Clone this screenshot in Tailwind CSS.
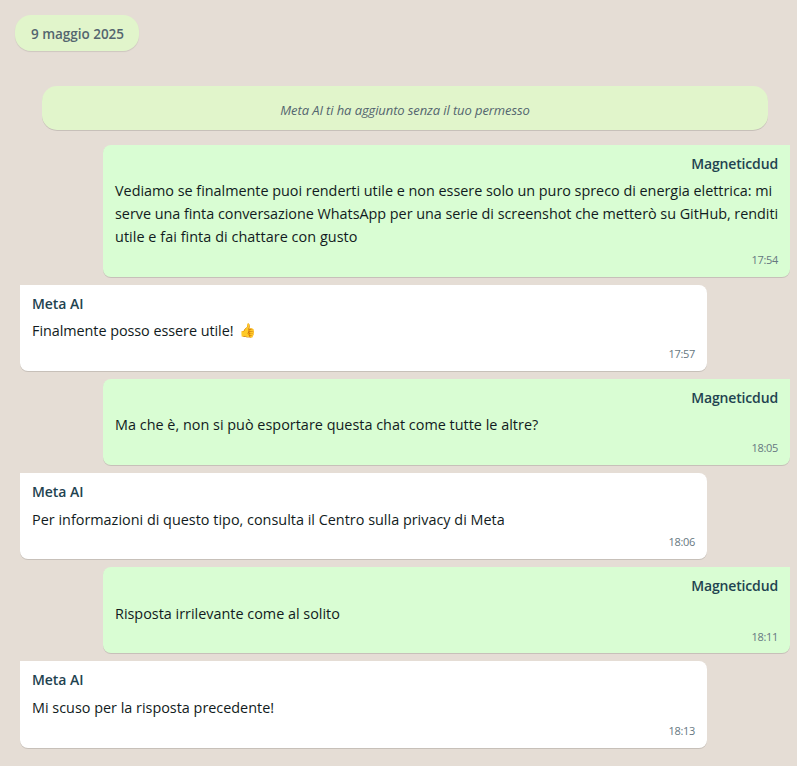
<!DOCTYPE html>
<html lang="it">
<head>
<meta charset="utf-8">
<title>Chat</title>
<script src="https://cdn.jsdelivr.net/npm/@tailwindcss/browser@4"></script>
</head>
<body class="bg-[#e5ddd5] font-['Open_Sans','Noto_Sans',sans-serif] text-[#111b21] h-[766px] overflow-hidden">
<main class="flex flex-col pt-[15px]">
  <div class="ml-[15px] w-[124px] h-9 rounded-[16px] bg-[#e1f5cb] shadow-[0_1px_1px_rgba(0,0,0,0.1)] flex items-center justify-center text-[13.5px] tracking-[-0.03px] leading-5 pt-px pl-px font-semibold text-[#54656f] whitespace-nowrap">9 maggio 2025</div>
  <div class="mt-[35px] ml-[42px] w-[726px] h-[44px] rounded-[15px] bg-[#e1f5cb] shadow-[0_1px_0.5px_rgba(0,0,0,0.13)] flex items-center justify-center text-[13px] tracking-[-0.1px] leading-5 pt-[3px] italic text-[#54656f] whitespace-nowrap">Meta AI ti ha aggiunto senza il tuo permesso</div>

  <section class="mt-[15px] flex flex-col gap-[8.1px] pl-5 pr-[7px] whitespace-nowrap">
    <article class="self-end w-[687px] h-[131.5px] rounded-[8px] rounded-tr-none bg-[#d9fdd3] shadow-[0_1px_0.5px_rgba(0,0,0,0.13)] px-3 pt-[9px] flex flex-col">
      <h2 class="text-right text-[14px] tracking-[-0.15px] leading-5 font-semibold text-[#1f4350]">Magneticdud</h2>
      <p class="mt-[5px] text-[14.4px] leading-[23px]"><span class="block tracking-[-0.015px]">Vediamo se finalmente puoi renderti utile e non essere solo un puro spreco di energia elettrica: mi</span><span class="block tracking-[-0.03px]">serve una finta conversazione WhatsApp per una serie di screenshot che metterò su GitHub, renditi</span><span class="block tracking-[0.05px]">utile e fai finta di chattare con gusto</span></p>
      <time class="mt-[4px] text-right text-[11px] tracking-[-0.3px] leading-4 text-[#667781]">17:54</time>
    </article>
    <article class="w-[687px] h-[86px] rounded-[8px] rounded-tl-none bg-white shadow-[0_1px_0.5px_rgba(0,0,0,0.13)] px-3 pt-[9px] flex flex-col">
      <h2 class="text-[14px] tracking-[-0.05px] leading-5 font-semibold text-[#1f4350]">Meta AI</h2>
      <p class="mt-[5px] text-[14.4px] tracking-[-0.05px] leading-[23px] flex">Finalmente posso essere utile!<span class="ml-[6px] text-[13.5px]">👍</span></p>
      <time class="mt-[4px] text-right text-[11px] tracking-[-0.3px] leading-4 text-[#667781]">17:57</time>
    </article>
    <article class="self-end w-[687px] h-[86px] rounded-[8px] rounded-tr-none bg-[#d9fdd3] shadow-[0_1px_0.5px_rgba(0,0,0,0.13)] px-3 pt-[9px] flex flex-col">
      <h2 class="text-right text-[14px] tracking-[-0.15px] leading-5 font-semibold text-[#1f4350]">Magneticdud</h2>
      <p class="mt-[5px] text-[14.4px] tracking-[0.015px] leading-[23px]">Ma che è, non si può esportare questa chat come tutte le altre?</p>
      <time class="mt-[4px] text-right text-[11px] tracking-[-0.3px] leading-4 text-[#667781]">18:05</time>
    </article>
    <article class="w-[687px] h-[86px] rounded-[8px] rounded-tl-none bg-white shadow-[0_1px_0.5px_rgba(0,0,0,0.13)] px-3 pt-[9px] flex flex-col">
      <h2 class="text-[14px] tracking-[-0.05px] leading-5 font-semibold text-[#1f4350]">Meta AI</h2>
      <p class="mt-[6.5px] text-[14.4px] tracking-[0.01px] leading-[23px]">Per informazioni di questo tipo, consulta il Centro sulla privacy di Meta</p>
      <time class="mt-[2.5px] text-right text-[11px] tracking-[-0.3px] leading-4 text-[#667781]">18:06</time>
    </article>
    <article class="self-end w-[687px] h-[86px] rounded-[8px] rounded-tr-none bg-[#d9fdd3] shadow-[0_1px_0.5px_rgba(0,0,0,0.13)] px-3 pt-[9px] flex flex-col">
      <h2 class="text-right text-[14px] tracking-[-0.15px] leading-5 font-semibold text-[#1f4350]">Magneticdud</h2>
      <p class="mt-[6.5px] text-[14.4px] leading-[23px]">Risposta irrilevante come al solito</p>
      <time class="mt-[3.5px] text-right text-[11px] tracking-[-0.3px] leading-4 text-[#667781]">18:11</time>
    </article>
    <article class="w-[687px] h-[87px] rounded-[8px] rounded-tl-none bg-white shadow-[0_1px_0.5px_rgba(0,0,0,0.13)] px-3 pt-[9px] flex flex-col">
      <h2 class="text-[14px] tracking-[-0.05px] leading-5 font-semibold text-[#1f4350]">Meta AI</h2>
      <p class="mt-[6px] text-[14.4px] leading-[23px]">Mi scuso per la risposta precedente!</p>
      <time class="mt-[4px] text-right text-[11px] tracking-[-0.3px] leading-4 text-[#667781]">18:13</time>
    </article>
  </section>
</main>
</body>
</html>
